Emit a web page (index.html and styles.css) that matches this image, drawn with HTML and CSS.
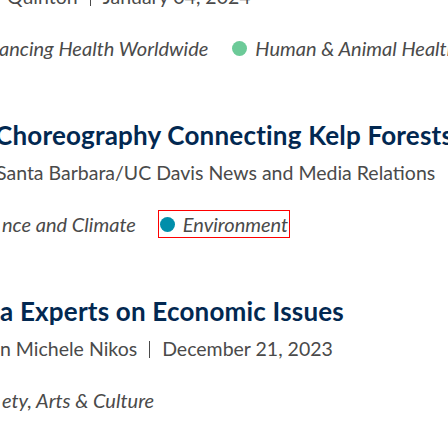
FILE: index.html
```html
<!DOCTYPE html>
<html lang="en">
<head>
<meta charset="utf-8">
<title>News</title>
<link rel="stylesheet" href="styles.css">
</head>
<body>
<main class="feed">
  <article class="story story-first">
    <p class="byline"><span class="shift-q">Quinton</span><span class="sep"></span>January 04, 2024</p>
    <ul class="cats">
      <li class="cat cat-lead"><span class="cat-text">ancing Health Worldwide</span></li>
      <li class="cat"><span class="dot dot-green"></span><span class="cat-text">Human &amp; Animal Health</span></li>
    </ul>
  </article>
  <article class="story">
    <h2 class="title"><span class="shift-c">Choreography Connecting Kelp Forests</span></h2>
    <p class="byline"><span class="shift-s">Santa Barbara/UC Davis News and Media Relations</span><span class="sep"></span>January 03, 2024</p>
    <ul class="cats">
      <li class="cat"><span class="cat-text">nce and Climate</span></li>
      <li class="cat cat-active"><span class="dot dot-teal"></span><span class="cat-text">Environment</span></li>
    </ul>
  </article>
  <article class="story">
    <h2 class="title">a Experts on Economic Issues</h2>
    <p class="byline"><span class="shift-n">n Michele Nikos</span><span class="sep"></span>December 21, 2023</p>
    <ul class="cats">
      <li class="cat"><span class="cat-text">ety, Arts &amp; Culture</span></li>
    </ul>
  </article>
</main>
</body>
</html>
```
FILE: styles.css
```css
html, body {
  margin: 0;
  padding: 0;
  background: #ffffff;
}
body {
  width: 448px;
  height: 448px;
  overflow: hidden;
  font-family: Lato, "Open Sans", sans-serif;
  color: #4a4a4a;
}
.feed {
  margin-top: -15px;
  display: flex;
  flex-direction: column;
}
.story {
  display: flex;
  flex-direction: column;
  margin-top: 60px;
}
.story-first {
  margin-top: 0;
}
.title {
  margin: 0;
  font-size: 26px;
  line-height: 30px;
  font-weight: 700;
  letter-spacing: 0.2px;
  color: #022851;
  white-space: nowrap;
}
.byline {
  margin: 11px 0 0;
  font-size: 19.5px;
  line-height: 24px;
  white-space: nowrap;
  display: flex;
  align-items: center;
}
.story-first .byline {
  margin-top: 0;
}
.sep {
  display: inline-block;
  width: 1px;
  height: 17px;
  background: #4a4a4a;
  margin: 0 12px;
}
.cats {
  list-style: none;
  margin: 27px 0 0;
  padding: 0;
  display: flex;
  gap: 20px;
  white-space: nowrap;
}
.cat {
  display: flex;
  align-items: center;
  gap: 8px;
  font-size: 20px;
  line-height: 24px;
  font-style: italic;
  border: 1px solid transparent;
  padding: 1px 1px;
  margin: -2px 0;
}
.cat-lead {
  margin-left: -3px;
}
.cat-active {
  border-color: #ff0000;
}
.dot {
  width: 15px;
  height: 15px;
  border-radius: 50%;
  flex: none;
}
.dot-green { background: #6cca98; }
.dot-teal { background: #008eaa; }
.shift-q { margin-left: 7px; }
.shift-c { margin-left: -5px; }
.shift-s { margin-left: -4px; }
.shift-n { margin-left: 0; }
```
